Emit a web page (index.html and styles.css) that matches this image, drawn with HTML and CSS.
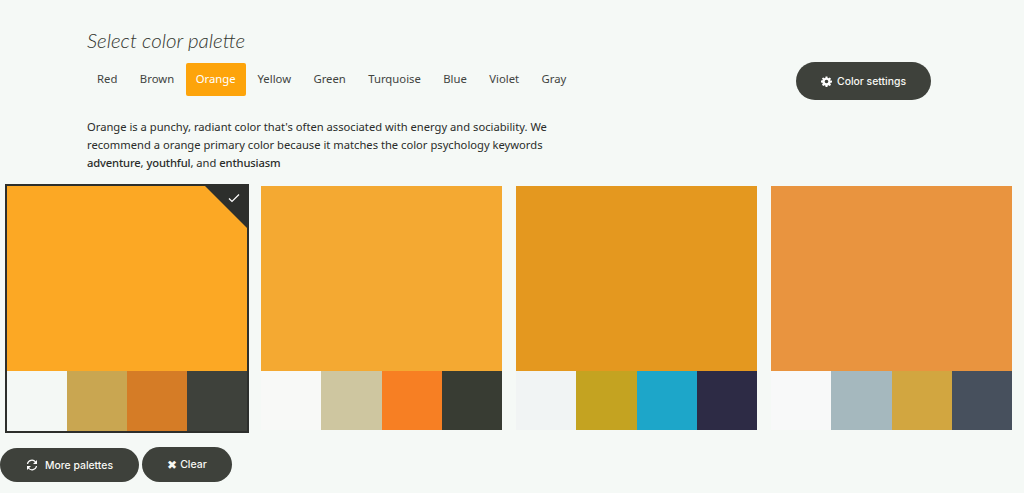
FILE: index.html
```html
<!DOCTYPE html>
<html lang="en">
<head>
<meta charset="utf-8">
<title>Select color palette</title>
<link rel="stylesheet" href="styles.css">
</head>
<body>
<header class="head">
  <div class="intro">
    <h1 class="title">Select color palette</h1>
    <nav class="tabs">
      <a class="tab">Red</a>
      <a class="tab">Brown</a>
      <a class="tab active">Orange</a>
      <a class="tab">Yellow</a>
      <a class="tab">Green</a>
      <a class="tab">Turquoise</a>
      <a class="tab">Blue</a>
      <a class="tab">Violet</a>
      <a class="tab">Gray</a>
    </nav>
    <p class="desc">Orange is a punchy, radiant color that's often associated with energy and sociability. We recommend a orange primary color because it matches the color psychology keywords <b>adventure</b>, <b>youthful</b>, and <b>enthusiasm</b></p>
  </div>
  <button class="btn settings">
    <svg class="ico" viewBox="0 0 24 24" width="11" height="11"><path fill="#fff" fill-rule="evenodd" d="M10 1h4l.6 3.1 1.7.7L19 3l2.9 2.9-1.8 2.7.7 1.7L24 10v4l-3.2.6-.7 1.7 1.8 2.7L19 21.9l-2.7-1.8-1.7.7L14 24h-4l-.6-3.2-1.7-.7L5 21.9 2.1 19l1.8-2.7-.7-1.7L0 14v-4l3.2-.7.7-1.7L2.100 5 5 3l2.700 1.800 1.700-.7zM12 8a4 4 0 1 0 0 8 4 4 0 0 0 0-8z"/></svg>
    Color settings
  </button>
</header>

<section class="palettes">
  <article class="card selected">
    <div class="main c-a"><span class="corner"><svg viewBox="0 0 12 10" width="12" height="10"><path d="M1 5.500 4 8.500 11 1.500" fill="none" stroke="#fff" stroke-width="1.200"/></svg></span></div>
    <div class="swatches"><i class="s1a"></i><i class="s2a"></i><i class="s3a"></i><i class="s4a"></i></div>
  </article>
  <article class="card">
    <div class="main c-b"></div>
    <div class="swatches"><i class="s1b"></i><i class="s2b"></i><i class="s3b"></i><i class="s4b"></i></div>
  </article>
  <article class="card">
    <div class="main c-c"></div>
    <div class="swatches"><i class="s1c"></i><i class="s2c"></i><i class="s3c"></i><i class="s4c"></i></div>
  </article>
  <article class="card">
    <div class="main c-d"></div>
    <div class="swatches"><i class="s1d"></i><i class="s2d"></i><i class="s3d"></i><i class="s4d"></i></div>
  </article>
</section>

<footer class="actions">
  <button class="btn more">
    <svg class="ico" viewBox="0 0 24 24" width="12" height="12"><path fill="none" stroke="#fff" stroke-width="2.400" d="M3 10a9 9 0 0 1 16-4l2 3M21 14a9 9 0 0 1-16 4l-2-3"/><path fill="#fff" d="M22 2v8h-8zM2 22v-8h8z"/></svg>
    More palettes
  </button>
  <button class="btn clear"><span class="x">✖</span>Clear</button>
</footer>
</body>
</html>
```
FILE: styles.css
```css
* { box-sizing: border-box; }
html, body { margin: 0; height: 493px; overflow: hidden; }
body { background: #f5f9f6; color: #2f322e; font-family: "Noto Sans", sans-serif; }

.head { display: flex; align-items: flex-start; padding: 26px 93px 0 87px; height: 184px; }
.intro { width: 470px; margin-right: auto; }
.title { margin: 0; font: italic 300 20.500px/28px "Lato", sans-serif; color: #33362f; }

.tabs { display: flex; margin-top: 9px; height: 33px; }
.tab { display: flex; align-items: center; padding: 0 10px 2px; font-size: 11.300px; color: #41443f; margin-right: 2.400px; }
.tab.active { background: #fda40b; color: #fff; border-radius: 2px; margin-right: 2px; }
.tab:first-child { margin-right: 2.500px; }
.tab:nth-child(2) { margin-right: 1.500px; }

.desc { margin: 22px 0 0; font-size: 11.200px; line-height: 17.800px; color: #2a2c29; }
.desc b { font-weight: 500; letter-spacing: -.15px; }

.btn { display: inline-flex; align-items: center; justify-content: center; border: 0; border-radius: 20px; background: #3e413b; color: #f8f8f4; font: 500 10.400px "Inter", sans-serif; padding: 0; }
.ico { flex: none; margin-right: 5px; }
.settings { width: 135px; height: 38px; margin-top: 36px; }

.palettes { display: flex; align-items: flex-start; padding-left: 5px; }
.card { flex: none; width: 241px; margin: 2px 14px 0 0; }
.card.selected { width: 244px; margin: 0 12px 0 0; border: 2px solid #2d2f2c; }
.main { position: relative; height: 185px; overflow: hidden; }
.c-a { background: #fca824; }
.c-b { background: #f4a932; }
.c-c { background: #e4981f; }
.c-d { background: #e9943f; }
.corner { position: absolute; top: 0; right: 0; width: 42px; height: 42px; background: #2d2f2c; clip-path: polygon(0 0, 100% 0, 100% 100%); }
.corner svg { position: absolute; top: 7px; right: 7px; }

.swatches { display: flex; height: 59px; }
.selected .swatches { height: 60px; }
.swatches i { flex: 1; display: block; }
.s1a { background: #f4f8f5; }
.s2a { background: #c9a651; }
.s3a { background: #d57c26; }
.s4a { background: #3e413b; }
.s1b { background: #f8f9f7; }
.s2b { background: #cec6a0; }
.s3b { background: #f77f23; }
.s4b { background: #383c33; }
.s1c { background: #f1f4f4; }
.s2c { background: #c4a321; }
.s3c { background: #1da6c9; }
.s4c { background: #2d2b45; }
.s1d { background: #f8f9f9; }
.s2d { background: #a5b8be; }
.s3d { background: #d2a640; }
.s4d { background: #47505d; }

.actions { display: flex; align-items: flex-end; gap: 3px; margin-top: 14px; }
.more { width: 139px; height: 34px; }
.more .ico { margin-right: 7px; }
.clear { width: 90px; height: 35px; font-size: 10.500px; }
.x { margin-right: 3px; font-size: 12px; }
```
